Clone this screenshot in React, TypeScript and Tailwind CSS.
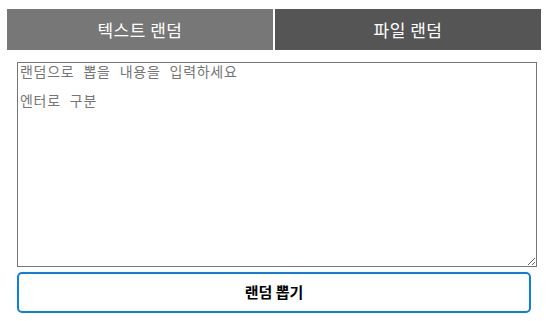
export default function App() {
  return (
    <div className="w-[547px] h-[321px] bg-white pt-[9px] pl-[7px] font-['Noto_Sans_CJK_KR',sans-serif]">
      <div className="flex w-[534px] gap-[2px]">
        <button className="h-[41px] w-[266px] bg-[#777777] text-[17px] tracking-[0.5px] text-white">
          텍스트 랜덤
        </button>
        <button className="h-[41px] w-[266px] bg-[#555555] text-[17px] tracking-[0.5px] text-white">
          파일 랜덤
        </button>
      </div>
      <div className="ml-[10px] mt-[12px] flex flex-col gap-[5px]">
        <textarea
          className="block h-[205px] w-[520px] resize-y border border-[#767676] px-[2px] py-[2px] font-['DejaVu_Sans_Mono','Noto_Sans_CJK_KR',monospace] text-[14px] leading-[14.5px] tracking-[0.7px] placeholder:text-[#757575]"
          placeholder={'랜덤으로 뽑을 내용을 입력하세요\n\n엔터로 구분'}
        />
        <button className="h-[41px] w-[514px] rounded-[5px] border-2 border-[#0a80e0] bg-white text-[15px] font-bold text-black">
          랜덤 뽑기
        </button>
      </div>
    </div>
  );
}
